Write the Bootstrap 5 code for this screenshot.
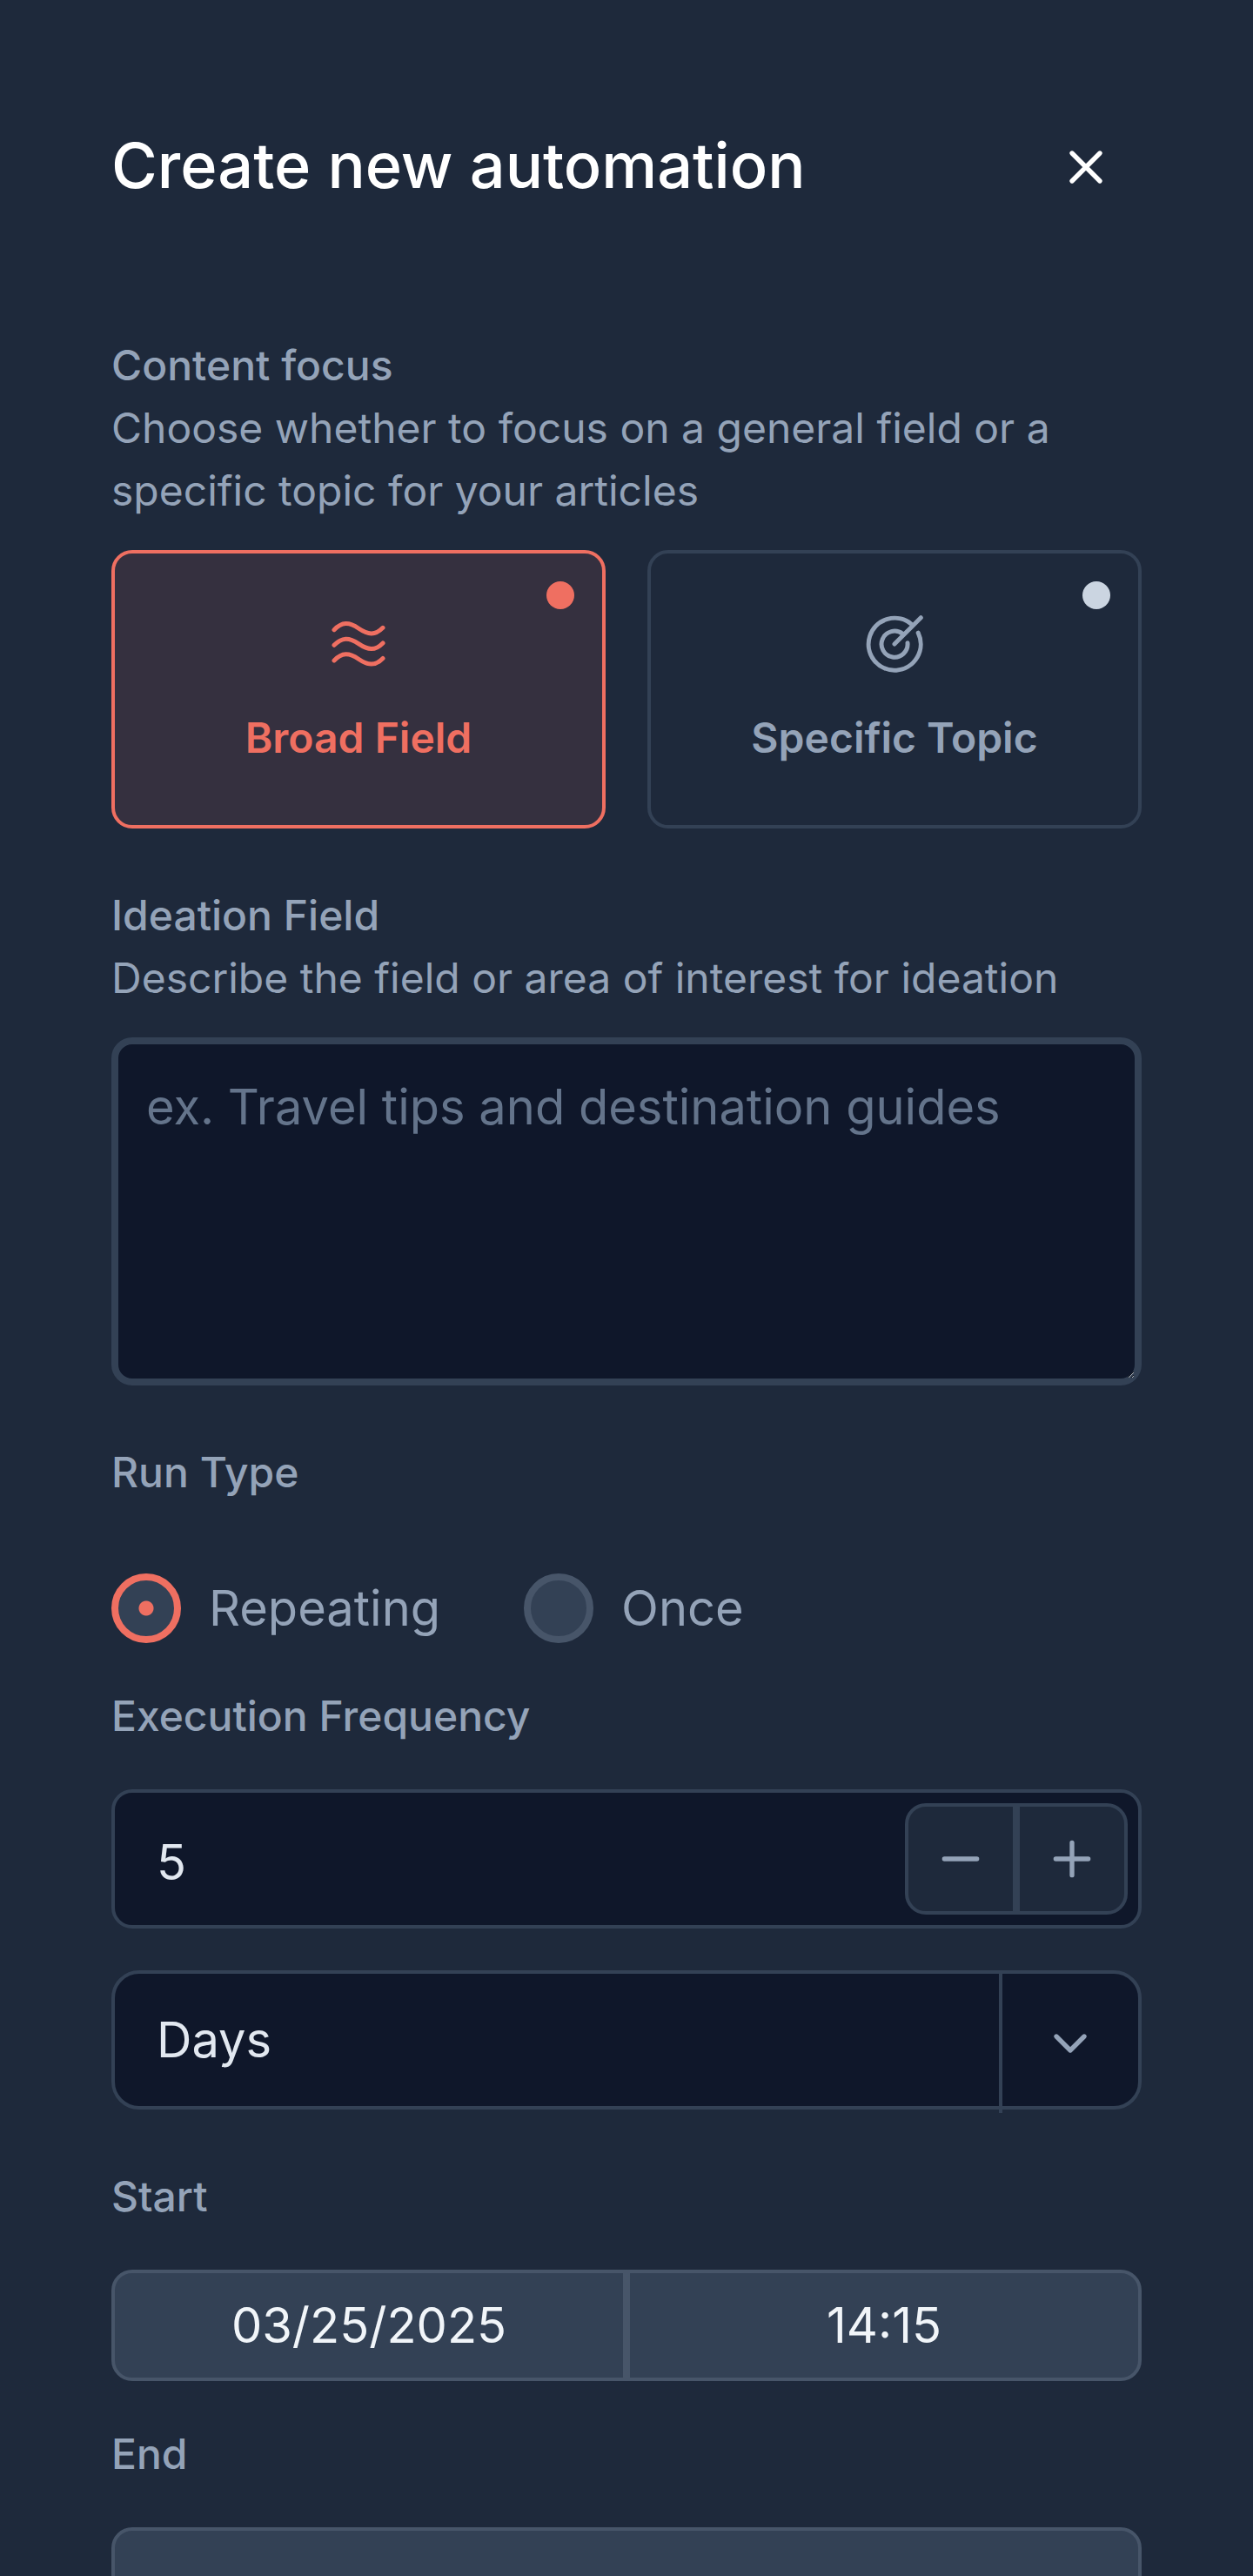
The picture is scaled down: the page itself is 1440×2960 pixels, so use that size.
<!DOCTYPE html>
<html lang="en">
<head>
<meta charset="utf-8">
<meta name="viewport" content="width=device-width, initial-scale=1">
<title>Create new automation</title>
<link href="https://cdn.jsdelivr.net/npm/bootstrap@5.3.0/dist/css/bootstrap.min.css" rel="stylesheet">
<style>
:root { --slate-950:#0f172a; --slate-800:#1e293b; --slate-700:#334155; --slate-600:#475569; --slate-400:#94a3b8; --coral:#ef6f61; }
body { background:var(--slate-800); color:var(--slate-400); font-family:Inter,"Liberation Sans",sans-serif; font-size:48px; line-height:72px; }
.panel { height:100vh; padding:128px 128px 0; }
.panel-title { font-size:72px; line-height:108px; font-weight:500; color:#fff; }
.icon { width:64px; height:64px; flex:none; fill:none; stroke:currentColor; stroke-width:2; stroke-linecap:round; stroke-linejoin:round; }
.icon-lg { width:80px; height:80px; stroke-width:5; }
.icon-btn { width:128px; height:128px; border:0; background:none; color:#fff; }
.focus-block { margin-top:128px; }
.field-label { font-weight:500; display:block; font-size:48px; line-height:72px; margin:0; padding:0; float:none; }
.focus-grid { gap:48px; margin-top:32px; }
.focus-card { flex:1 1 0; height:320px; border:4px solid var(--slate-700); border-radius:24px; font-weight:600; gap:32px; cursor:pointer; }
.focus-card::after { content:""; position:absolute; top:32px; right:32px; width:32px; height:32px; border-radius:50%; background:#cbd5e1; }
.btn-check:checked + .focus-card { border-color:var(--coral); color:var(--coral); background:#35303f; }
.btn-check:checked + .focus-card::after { background:var(--coral); }
.section { margin-top:64px; }
.entry, .entry:focus { background:var(--slate-950); color:#e2e8f0; border:4px solid var(--slate-700); border-radius:24px; font-size:56px; line-height:80px; box-shadow:none; }
.idea, .idea:focus { height:400px; border-width:8px; padding:32px; margin-top:32px; }
.idea::placeholder { color:#64748b; }
.run-row { margin-top:80px; gap:96px; }
.run-opt { gap:32px; font-size:56px; line-height:80px; }
.run-opt .form-check-input { width:80px; height:80px; margin:0; float:none; border:8px solid var(--slate-600); background:var(--slate-700); box-shadow:none; }
.run-opt .form-check-input:checked { border-color:var(--coral); background:radial-gradient(circle, var(--coral) 8px, var(--slate-700) 9px); }
.field-gap { margin-top:48px; }
.count, .count:focus { height:160px; padding:8px 300px 0 48px; }
.stepper { position:absolute; top:16px; right:16px; }
.step-btn { width:128px; height:128px; padding:0; border:4px solid var(--slate-700); background:var(--slate-800); color:var(--slate-400); }
.step-btn:first-child { border-radius:24px 0 0 24px; }
.step-btn:last-child { border-radius:0 24px 24px 0; }
.unit, .unit:focus { height:160px; border-radius:32px; padding:0 200px 0 48px; background-image:none; }
.unit-arrow { position:absolute; top:4px; right:4px; width:160px; height:160px; border-left:4px solid var(--slate-700); pointer-events:none; }
.stamp, .stamp:focus { height:128px; padding:0; text-align:center; background:var(--slate-700); color:#f1f5f9; border:4px solid var(--slate-600); border-radius:24px; font-size:56px; line-height:80px; box-shadow:none; }
.stamp-pair .stamp:first-child { border-radius:24px 0 0 24px; }
.stamp-pair .stamp:last-child { border-radius:0 24px 24px 0; }
</style>
</head>
<body>
<form class="panel overflow-hidden" onsubmit="return false">
  <header class="d-flex align-items-center justify-content-between">
    <h1 class="panel-title mb-0 pb-1">Create new automation</h1>
    <button type="button" class="icon-btn d-flex align-items-center justify-content-center p-0" aria-label="Close"><svg class="icon" viewBox="0 0 24 24"><path d="M18 6 6 18M6 6l12 12"/></svg></button>
  </header>

  <fieldset class="focus-block">
    <legend class="field-label">Content focus</legend>
    <p class="mb-0">Choose whether to focus on a general field or a specific topic for your articles</p>
    <div class="focus-grid d-flex">
      <input class="btn-check" type="radio" name="focus" id="broad" checked>
      <label class="focus-card position-relative d-flex flex-column align-items-center justify-content-center" for="broad">
        <svg class="icon icon-lg" viewBox="0 0 80 80"><path d="M12 23.7C21 14.5 29 14.5 40 22S59 30.5 68 21.3M12 41.3C21 32.1 29 32.1 40 39.6S59 48.1 68 38.9M12 58.9C21 49.7 29 49.7 40 57.2S59 65.7 68 56.5"/></svg>
        Broad Field
      </label>
      <input class="btn-check" type="radio" name="focus" id="specific">
      <label class="focus-card position-relative d-flex flex-column align-items-center justify-content-center" for="specific">
        <svg class="icon icon-lg" viewBox="0 0 80 80"><path d="M40 40 70.3 9.7M59.3 17.1A30 30 0 1 0 67.2 27.2M49.3 28.3A15 15 0 1 0 55 38.7"/></svg>
        Specific Topic
      </label>
    </div>
  </fieldset>

  <section class="section">
    <label class="field-label" for="idea">Ideation Field</label>
    <p class="mb-0">Describe the field or area of interest for ideation</p>
    <textarea class="form-control entry idea" id="idea" placeholder="ex. Travel tips and destination guides"></textarea>
  </section>

  <fieldset class="section">
    <legend class="field-label">Run Type</legend>
    <div class="run-row d-flex">
      <label class="run-opt d-flex align-items-center" for="repeating"><input class="form-check-input" type="radio" name="run" id="repeating" checked>Repeating</label>
      <label class="run-opt d-flex align-items-center" for="once"><input class="form-check-input" type="radio" name="run" id="once">Once</label>
    </div>
  </fieldset>

  <section class="field-gap">
    <label class="field-label" for="count">Execution Frequency</label>
    <div class="field-gap position-relative">
      <input class="form-control entry count" type="text" inputmode="numeric" id="count" value="5">
      <div class="stepper d-flex">
        <button type="button" class="step-btn d-flex align-items-center justify-content-center" aria-label="Decrease"><svg class="icon" viewBox="0 0 24 24"><path d="M5 12h14"/></svg></button>
        <button type="button" class="step-btn d-flex align-items-center justify-content-center" aria-label="Increase"><svg class="icon" viewBox="0 0 24 24"><path d="M5 12h14M12 5v14"/></svg></button>
      </div>
    </div>
    <div class="field-gap position-relative">
      <select class="form-select entry unit" aria-label="Frequency unit"><option>Days</option></select>
      <span class="unit-arrow text-reset d-flex align-items-center justify-content-center"><svg class="icon" viewBox="0 0 24 24"><path d="m6 9 6 6 6-6"/></svg></span>
    </div>
  </section>

  <section class="section">
    <label class="field-label" for="start-date">Start</label>
    <div class="field-gap stamp-pair d-flex">
      <input class="form-control stamp" type="text" id="start-date" value="03/25/2025">
      <input class="form-control stamp" type="text" aria-label="Start time" value="14:15">
    </div>
  </section>

  <section class="field-gap">
    <label class="field-label" for="end-date">End</label>
    <input class="form-control stamp field-gap" type="text" id="end-date">
  </section>
</form>
<script src="https://cdn.jsdelivr.net/npm/bootstrap@5.3.0/dist/js/bootstrap.bundle.min.js"></script>
</body>
</html>
